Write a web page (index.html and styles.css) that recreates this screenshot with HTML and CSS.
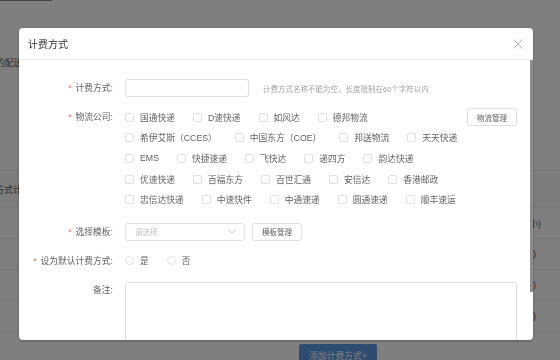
FILE: index.html
```html
<!DOCTYPE html>
<html lang="zh-CN">
<head>
    <meta charset="UTF-8">
    <meta name="viewport" content="width=device-width, initial-scale=1.0">
    <title>计费方式</title>
    <link rel="stylesheet" href="styles.css">
</head>
<body>
    <div class="page">
        <div class="top-line"></div>
        <p class="intro">的配送方式</p>

        <div class="fee-table">
            <div class="fee-row fee-head">
                <span class="cell-left">计费方式计算规则</span>
                <span class="cell-right"></span>
            </div>
            <div class="fee-row">
                <span class="cell-left"></span>
                <span class="cell-right">重量(大小)</span>
            </div>
            <div class="fee-row">
                <span class="cell-left"></span>
                <span class="cell-right cell-end">(0)</span>
            </div>
            <div class="fee-row">
                <span class="cell-left"></span>
                <span class="cell-right cell-end">(0)</span>
            </div>
            <div class="fee-row">
                <span class="cell-left"></span>
                <span class="cell-right cell-end">(0)</span>
            </div>
        </div>

        <div class="page-actions">
            <button class="btn-primary">添加计费方式+</button>
        </div>
    </div>

    <div class="mask"></div>

    <div class="dialog">
        <div class="dialog-header">
            <span class="dialog-title">计费方式</span>
            <svg class="dialog-close" width="10" height="10" viewBox="0 0 10 10">
                <path d="M0.5 0.5 L9.5 9.5 M9.5 0.5 L0.5 9.5" stroke="#b4b7bd" stroke-width="1" fill="none"/>
            </svg>
        </div>

        <div class="dialog-body">
            <div class="form-row row-name">
                <label class="form-label"><i class="req">*</i>计费方式:</label>
                <div class="form-content inline">
                    <div class="input"></div>
                    <span class="hint">计费方式名称不能为空，长度限制在60个字符以内</span>
                </div>
            </div>

            <div class="form-row row-company">
                <label class="form-label check-label"><i class="req">*</i>物流公司:</label>
                <div class="form-content company">
                    <div class="check-list">
                        <div class="check-line">
                            <span class="check"><i class="box"></i>国通快递</span>
                            <span class="check"><i class="box"></i>D速快递</span>
                            <span class="check"><i class="box"></i>如风达</span>
                            <span class="check"><i class="box"></i>德邦物流</span>
                        </div>
                        <div class="check-line">
                            <span class="check"><i class="box"></i>希伊艾斯（CCES）</span>
                            <span class="check"><i class="box"></i>中国东方（COE）</span>
                            <span class="check"><i class="box"></i>邦送物流</span>
                            <span class="check"><i class="box"></i>天天快递</span>
                        </div>
                        <div class="check-line">
                            <span class="check"><i class="box"></i>EMS</span>
                            <span class="check"><i class="box"></i>快捷速递</span>
                            <span class="check"><i class="box"></i>飞快达</span>
                            <span class="check"><i class="box"></i>递四方</span>
                            <span class="check"><i class="box"></i>韵达快递</span>
                        </div>
                        <div class="check-line">
                            <span class="check"><i class="box"></i>优速快递</span>
                            <span class="check"><i class="box"></i>百福东方</span>
                            <span class="check"><i class="box"></i>百世汇通</span>
                            <span class="check"><i class="box"></i>安信达</span>
                            <span class="check"><i class="box"></i>香港邮政</span>
                        </div>
                        <div class="check-line">
                            <span class="check"><i class="box"></i>忠信达快递</span>
                            <span class="check"><i class="box"></i>中速快件</span>
                            <span class="check"><i class="box"></i>中通速递</span>
                            <span class="check"><i class="box"></i>圆通速递</span>
                            <span class="check"><i class="box"></i>顺丰速运</span>
                        </div>
                    </div>
                    <button class="btn-plain btn-manage">物流管理</button>
                </div>
            </div>

            <div class="form-row row-template">
                <label class="form-label"><i class="req">*</i>选择模板:</label>
                <div class="form-content inline">
                    <div class="select">
                        <span class="placeholder">请选择</span>
                        <svg width="8" height="5" viewBox="0 0 8 5">
                            <path d="M0.5 0.5 L4 4 L7.5 0.5" stroke="#c0c4cc" stroke-width="0.9" fill="none"/>
                        </svg>
                    </div>
                    <button class="btn-plain btn-template">模板管理</button>
                </div>
            </div>

            <div class="form-row row-default">
                <label class="form-label"><i class="req">*</i>设为默认计费方式:</label>
                <div class="form-content inline">
                    <span class="radio"><i class="circle"></i>是</span>
                    <span class="radio"><i class="circle"></i>否</span>
                </div>
            </div>

            <div class="form-row row-remark">
                <label class="form-label">备注:</label>
                <div class="form-content">
                    <div class="textarea"></div>
                </div>
            </div>
        </div>
        <div class="dialog-scroll"></div>
    </div>
</body>
</html>
```

FILE: styles.css
```css
html, body {
    margin: 0;
    height: 100%;
    overflow: hidden;
}

body {
    font-family: "Liberation Sans", "Noto Sans CJK SC", sans-serif;
    font-size: 8.75px;
    color: #606266;
    background: #fff;
}

/* page behind the dialog */
.page {
    position: relative;
    height: 360px;
}

.top-line {
    width: 52px;
    height: 1px;
    background: #888;
}

.intro {
    margin: 56px 0 0 -4px;
    line-height: 12px;
    color: #555;
}

.fee-table {
    margin-top: 101px;
    border-top: 1px solid #ebeef5;
}

.fee-row {
    display: flex;
    justify-content: space-between;
    align-items: center;
    height: 30px;
    border-bottom: 1px solid #ebeef5;
    color: #555;
}

.fee-head {
    height: 36px;
    background: #fafafa;
}

.cell-left {
    margin-left: -22px;
}

.cell-right {
    margin-right: 19px;
}

.cell-end {
    margin-right: 24px;
}

.page-actions {
    padding: 12px 0 0 299px;
}

.btn-primary {
    width: 78px;
    height: 22px;
    border: none;
    border-radius: 2px;
    background: #5a98e0;
    color: #fff;
    font-family: inherit;
    font-size: 8.75px;
    padding: 0;
}

.mask {
    position: fixed;
    inset: 0;
    background: rgba(0, 0, 0, 0.5);
}

/* dialog */
.dialog {
    position: fixed;
    left: 19px;
    top: 28px;
    width: 514px;
    height: 312px;
    background: #fff;
    border-radius: 4px;
    box-shadow: 0 1px 3px rgba(0, 0, 0, 0.3);
    display: flex;
    flex-direction: column;
    overflow: hidden;
}

.dialog-header {
    flex: none;
    height: 31px;
    border-bottom: 1px solid #ebeef5;
    display: flex;
    align-items: center;
    justify-content: space-between;
    padding: 0 10px 0 9px;
}

.dialog-title {
    font-size: 10px;
    color: #303133;
}

.dialog-close {
    display: block;
    margin-top: 1px;
}

.dialog-body {
    flex: 1;
    overflow: hidden;
    padding: 19px 16px 37px 0;
}

/* scrollbar thumb of the dialog body */
.dialog-scroll {
    position: absolute;
    right: 0;
    top: 32px;
    width: 3px;
    height: 232px;
    background: #8c8c8c;
}

.form-row {
    display: flex;
    align-items: flex-start;
}

.form-label {
    flex: none;
    width: 106px;
    box-sizing: border-box;
    padding-right: 12px;
    text-align: right;
    line-height: 18px;
}

.req {
    font-style: normal;
    color: #f56c6c;
    margin-right: 4px;
}

.form-content {
    flex: 1;
    min-width: 0;
}

.inline {
    display: flex;
    align-items: center;
    height: 18px;
}

.row-name { margin-bottom: 10px; }
.row-company { margin-bottom: 13px; }
.row-template { margin-bottom: 11px; }
.row-default { margin-bottom: 11px; }

.input {
    width: 124px;
    height: 18px;
    box-sizing: border-box;
    border: 1px solid #dcdfe6;
    border-radius: 3px;
}

.hint {
    margin-left: 14px;
    font-size: 7.5px;
    color: #a0a3a8;
}

/* companies */
.check-label {
    line-height: 20.6px;
}

.company {
    display: flex;
    align-items: flex-start;
    justify-content: space-between;
}

.check-list {
    min-width: 0;
}

.check-line {
    display: flex;
    height: 20.6px;
    align-items: center;
}

.check {
    display: inline-flex;
    align-items: center;
    margin-right: 18px;
    white-space: nowrap;
}

.box {
    width: 9px;
    height: 9px;
    box-sizing: border-box;
    border: 1px solid #dcdfe6;
    border-radius: 2px;
    margin-right: 6px;
}

.btn-plain {
    flex: none;
    height: 18px;
    width: 50px;
    padding: 0;
    border: 1px solid #dcdfe6;
    border-radius: 3px;
    background: #fff;
    color: #606266;
    font-family: inherit;
    font-size: 7.5px;
}

.btn-manage {
    margin-top: 1px;
}

.select {
    width: 120px;
    height: 18px;
    box-sizing: border-box;
    border: 1px solid #dcdfe6;
    border-radius: 3px;
    display: flex;
    align-items: center;
    justify-content: space-between;
    padding: 0 8px 0 9px;
}

.select svg {
    display: block;
}

.placeholder {
    font-size: 7.5px;
    color: #c0c4cc;
}

.btn-template {
    margin-left: 7px;
}

.radio {
    display: inline-flex;
    align-items: center;
    margin-right: 18px;
}

.circle {
    width: 9px;
    height: 9px;
    box-sizing: border-box;
    border: 1px solid #dcdfe6;
    border-radius: 50%;
    margin-right: 6px;
}

.textarea {
    margin-top: 1px;
    height: 80px;
    box-sizing: border-box;
    border: 1px solid #dcdfe6;
    border-radius: 3px;
}
```
